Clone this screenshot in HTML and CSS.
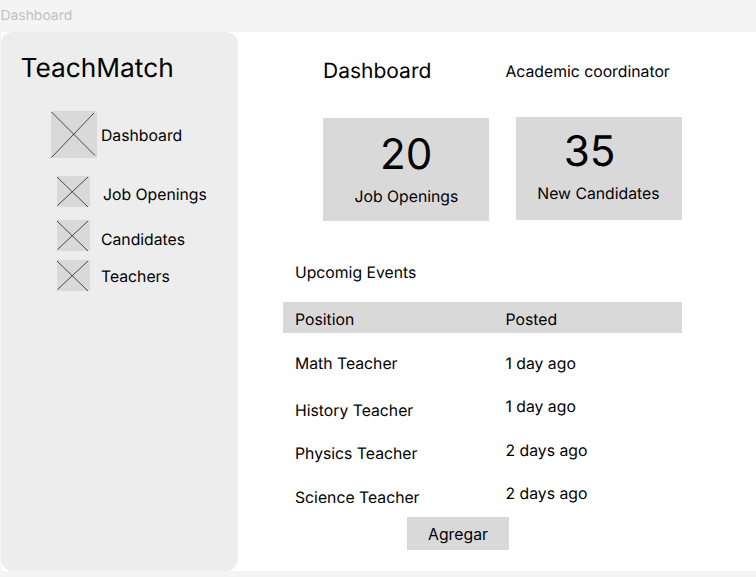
FILE: index.html
```html
<!DOCTYPE html>
<html lang="en">
<head>
<meta charset="utf-8">
<title>TeachMatch Dashboard</title>
<link rel="stylesheet" href="styles.css">
</head>
<body>
<div class="frame-label"><span>Dashboard</span></div>
<div class="frame">
  <aside class="sidebar">
    <h1 class="brand"><span>TeachMatch</span></h1>
    <nav class="nav">
      <a class="nav-item nav-main"><svg width="46" height="47" viewBox="0 0 46 47"><rect width="46" height="47"/><path d="M.5 1 44 44.500M.5 46.500 43 2"/></svg><span>Dashboard</span></a>
      <a class="nav-item nav-jobs"><svg width="33" height="31" viewBox="0 0 33 31"><rect width="33" height="31"/><path d="M0 1 31 31M.5 29.500 31 1"/></svg><span>Job Openings</span></a>
      <a class="nav-item nav-candidates"><svg width="33" height="31" viewBox="0 0 33 31"><rect width="33" height="31"/><path d="M0 1 31 31M.5 29.500 31 1"/></svg><span>Candidates</span></a>
      <a class="nav-item nav-teachers"><svg width="33" height="31" viewBox="0 0 33 31"><rect width="33" height="31"/><path d="M0 1 31 31M.5 29.500 31 1"/></svg><span>Teachers</span></a>
    </nav>
  </aside>
  <main class="main">
    <header class="header">
      <h2 class="title"><span>Dashboard</span></h2>
      <div class="role"><span>Academic coordinator</span></div>
    </header>
    <section class="cards">
      <div class="card card-jobs"><div class="number"><span>20</span></div><div class="caption"><span>Job Openings</span></div></div>
      <div class="card card-candidates"><div class="number"><span>35</span></div><div class="caption"><span>New Candidates</span></div></div>
    </section>
    <h3 class="subtitle"><span>Upcomig Events</span></h3>
    <div class="table-head"><span>Position</span><span>Posted</span></div>
    <div class="table-body">
      <div class="column positions"><span>Math Teacher</span><span>History Teacher</span><span>Physics Teacher</span><span>Science Teacher</span></div>
      <div class="column posted"><span>1 day ago</span><span>1 day ago</span><span>2 days ago</span><span>2 days ago</span></div>
    </div>
    <button class="add"><span>Agregar</span></button>
  </main>
</div>
</body>
</html>
```
FILE: styles.css
```css
* { box-sizing: border-box; }
body {
  margin: 0;
  height: 577px;
  overflow: hidden;
  background: #f4f4f4;
  color: #000;
  font: 15.750px/20px Inter, sans-serif;
  text-rendering: geometricPrecision;
}
h1, h2, h3 { margin: 0; font-weight: 400; }
.frame-label {
  height: 32px;
  padding: 6px 0 0 0.5px;
  color: #c2c2c2;
  font-size: 13.900px;
}
.frame {
  display: flex;
  height: 539px;
  margin-left: 1px;
  background: #fff;
}
.sidebar {
  flex: none;
  width: 236.5px;
  padding-top: 21px;
  border-radius: 12px;
  background: #ededed;
}
.brand {
  padding-left: 19.500px;
  font-size: 26.300px;
  line-height: 32px;
}
.nav { display: flex; flex-direction: column; padding: 26px 0 0 49.500px; }
.nav-item { display: flex; align-items: center; }
.nav-item svg { flex: none; fill: #d9d9d9; }
.nav-item path { fill: none; stroke: #222; stroke-width: 0.8; }
.nav-item span { padding-top: 2px; }
.nav-main { gap: 4.500px; }
.nav-jobs { margin: 18px 0 0 6.500px; gap: 13px; }
.nav-jobs span { padding-top: 6px; }
.nav-candidates { margin: 13px 0 0 6.500px; gap: 11px; }
.nav-candidates span { padding-top: 9px; }
.nav-teachers { margin: 9px 0 0 6.500px; gap: 11px; }
.main { flex: 1; padding: 23px 0 0 45.500px; }
.header { display: flex; align-items: center; height: 33px; padding-left: 40px; }
.title { width: 182.500px; font-size: 21px; line-height: 32px; }
.cards { display: flex; gap: 26.500px; padding: 29px 0 0 40px; }
.card { width: 166.300px; height: 103px; background: #d9d9d9; }
.number { font-size: 42.200px; line-height: 50px; }
.card-jobs { margin-top: 0.5px; padding-top: 12px; }
.card-jobs .number { padding-left: 57px; }
.card-jobs .caption { padding: 7px 0 0 31.500px; }
.card-candidates { padding-top: 10px; }
.card-candidates .number { padding-left: 48px; }
.card-candidates .caption { padding: 7px 0 0 21.500px; }
.subtitle { padding: 42.500px 0 0 12px; font-size: 15.750px; }
.table-head {
  display: grid;
  grid-template-columns: 210.500px 1fr;
  width: 399px;
  height: 31px;
  margin-top: 19px;
  padding: 8px 0 0 12px;
  background: #d9d9d9;
}
.table-body {
  display: grid;
  grid-template-columns: 210.500px 1fr;
  height: 169.500px;
  padding: 21px 0 0 12px;
  overflow: hidden;
}
.column { display: flex; flex-direction: column; gap: 23.400px; }
.positions span:first-child { margin-bottom: 3.400px; }
.add {
  display: block;
  width: 102px;
  height: 33px;
  margin: 14.900px 0 0 124px;
  padding: 2px 0 0;
  border: 0;
  background: #d9d9d9;
  color: #000;
  font: inherit;
}
```
